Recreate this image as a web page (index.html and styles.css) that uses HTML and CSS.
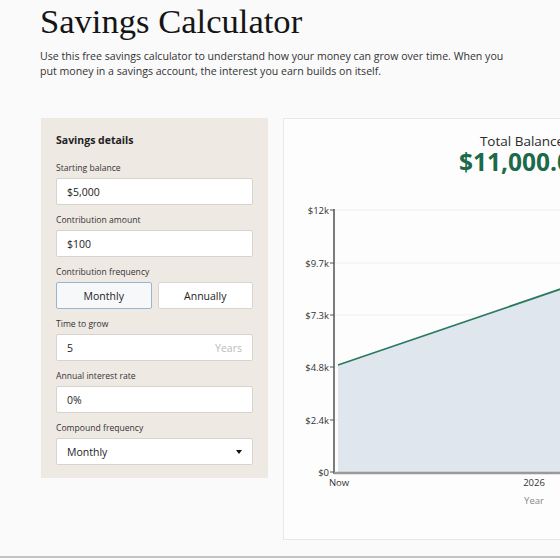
FILE: index.html
```html
<!DOCTYPE html>
<html>
<head>
<meta charset="utf-8">
<link rel="stylesheet" href="styles.css">
</head>
<body>
<div class="page">
  <h1 class="title">Savings Calculator</h1>
  <p class="intro">Use this free savings calculator to understand how your money can grow over time. When you put money in a savings account, the interest you earn builds on itself.</p>
  <div class="layout">
    <section class="panel">
      <h2 class="panel-title">Savings details</h2>
      <div class="field">
        <label class="label">Starting balance</label>
        <div class="input">$5,000</div>
      </div>
      <div class="field">
        <label class="label">Contribution amount</label>
        <div class="input">$100</div>
      </div>
      <div class="field">
        <label class="label">Contribution frequency</label>
        <div class="toggle">
          <div class="tbtn active">Monthly</div>
          <div class="tbtn">Annually</div>
        </div>
      </div>
      <div class="field">
        <label class="label">Time to grow</label>
        <div class="input split"><span>5</span><span class="unit">Years</span></div>
      </div>
      <div class="field">
        <label class="label">Annual interest rate</label>
        <div class="input">0%</div>
      </div>
      <div class="field">
        <label class="label">Compound frequency</label>
        <div class="input split"><span>Monthly</span><span class="caret"></span></div>
      </div>
    </section>
    <section class="card">
      <div class="total">
        <div class="total-label">Total Balance</div>
        <div class="total-value">$11,000.00</div>
      </div>
      <svg class="chart" width="478" height="330" viewBox="0 0 478 330">
        <g stroke="#efefef" stroke-width="1">
          <line x1="50" y1="15" x2="478" y2="15"/>
          <line x1="50" y1="68" x2="478" y2="68"/>
          <line x1="50" y1="120" x2="478" y2="120"/>
          <line x1="50" y1="172" x2="478" y2="172"/>
          <line x1="50" y1="225" x2="478" y2="225"/>
        </g>
        <polygon points="54,170 444,37 444,277 54,277" fill="#dfe6ee"/>
        <line x1="54" y1="170" x2="444" y2="37" stroke="#2a7a60" stroke-width="1.8"/>
        <line x1="50" y1="14" x2="50" y2="279" stroke="#7c7c7c" stroke-width="2"/>
        <line x1="50" y1="278" x2="478" y2="278" stroke="#999" stroke-width="2.5"/>
        <g stroke="#555" stroke-width="1">
          <line x1="46" y1="15" x2="50" y2="15"/>
          <line x1="46" y1="68" x2="50" y2="68"/>
          <line x1="46" y1="120" x2="50" y2="120"/>
          <line x1="46" y1="172" x2="50" y2="172"/>
          <line x1="46" y1="225" x2="50" y2="225"/>
          <line x1="46" y1="277" x2="50" y2="277"/>
        </g>
        <g class="tick" text-anchor="end">
          <text x="45" y="19">$12k</text>
          <text x="45" y="72">$9.7k</text>
          <text x="45" y="124">$7.3k</text>
          <text x="45" y="176">$4.8k</text>
          <text x="45" y="229">$2.4k</text>
          <text x="45" y="281">$0</text>
        </g>
        <g class="tick" text-anchor="middle">
          <text x="55" y="291">Now</text>
          <text x="250" y="291">2026</text>
        </g>
        <text class="axis-title" x="250" y="309" text-anchor="middle">Year</text>
      </svg>
    </section>
  </div>
</div>
<div class="footer-rule"></div>
</body>
</html>
```
FILE: styles.css
```css
html, body {
  margin: 0;
  padding: 0;
  background: #fafafa;
  overflow: hidden;
  width: 560px;
  height: 560px;
}
body {
  font-family: "Open Sans", "Lato", sans-serif;
  color: #2a2a2a;
  position: relative;
}
.page {
  padding: 0 0 0 40px;
  width: 900px;
}
.title {
  font-family: "Liberation Serif", serif;
  font-weight: normal;
  font-size: 34.6px;
  line-height: 40px;
  margin: 0;
  padding-top: 1px;
  color: #151515;
}
.intro {
  margin: 8px 0 0 0;
  font-size: 10.6px;
  line-height: 15px;
  width: 470px;
  color: #333;
}
.layout {
  display: flex;
  gap: 15px;
  margin-top: 39px;
  align-items: flex-start;
}
.panel {
  width: 197px;
  margin-left: 1px;
  background: #efe9e4;
  padding: 15px 15px 13px 15px;
  display: flex;
  flex-direction: column;
  gap: 9px;
}
.panel-title {
  margin: 0 0 6px 0;
  font-size: 10.5px;
  line-height: 14px;
  font-weight: 700;
  color: #222;
}
.field {
  display: flex;
  flex-direction: column;
  gap: 4px;
}
.label {
  font-size: 8.6px;
  line-height: 12px;
  color: #333;
}
.input {
  height: 27px;
  box-sizing: border-box;
  background: #fff;
  border: 1px solid #d6d3d0;
  border-radius: 2px;
  padding: 0 10px;
  font-size: 10.5px;
  display: flex;
  align-items: center;
  color: #222;
}
.split {
  justify-content: space-between;
}
.unit {
  color: #bbb;
}
.caret {
  width: 0;
  height: 0;
  border-left: 3.5px solid transparent;
  border-right: 3.5px solid transparent;
  border-top: 4px solid #111;
}
.toggle {
  display: flex;
  gap: 6px;
}
.tbtn {
  flex: 1;
  height: 27px;
  box-sizing: border-box;
  border: 1px solid #d8d6d4;
  border-radius: 2px;
  background: #fff;
  font-size: 10.5px;
  display: flex;
  align-items: center;
  justify-content: center;
  color: #222;
}
.tbtn.active {
  border: 1.5px solid #97b7cf;
  background: #f6f8fa;
}
.card {
  width: 478px;
  height: 422px;
  background: #fdfdfd;
  border: 1px solid #e8e8e8;
  box-sizing: border-box;
}
.total {
  text-align: center;
  padding-top: 14px;
  height: 63px;
  box-sizing: border-box;
}
.total-label {
  font-size: 13.5px;
  line-height: 16px;
  color: #2b2b2b;
}
.total-value {
  font-size: 24.5px;
  line-height: 26px;
  font-weight: 700;
  color: #1d6a4b;
}
.chart {
  display: block;
  margin-top: 13px;
}
.tick {
  font-family: "Open Sans", sans-serif;
  font-size: 9.5px;
  fill: #333;
}
.axis-title {
  font-family: "Open Sans", sans-serif;
  font-size: 9.5px;
  fill: #888;
}
.footer-rule {
  position: absolute;
  left: 0;
  right: 0;
  top: 556px;
  height: 2px;
  background: #c4c4c4;
}
```
